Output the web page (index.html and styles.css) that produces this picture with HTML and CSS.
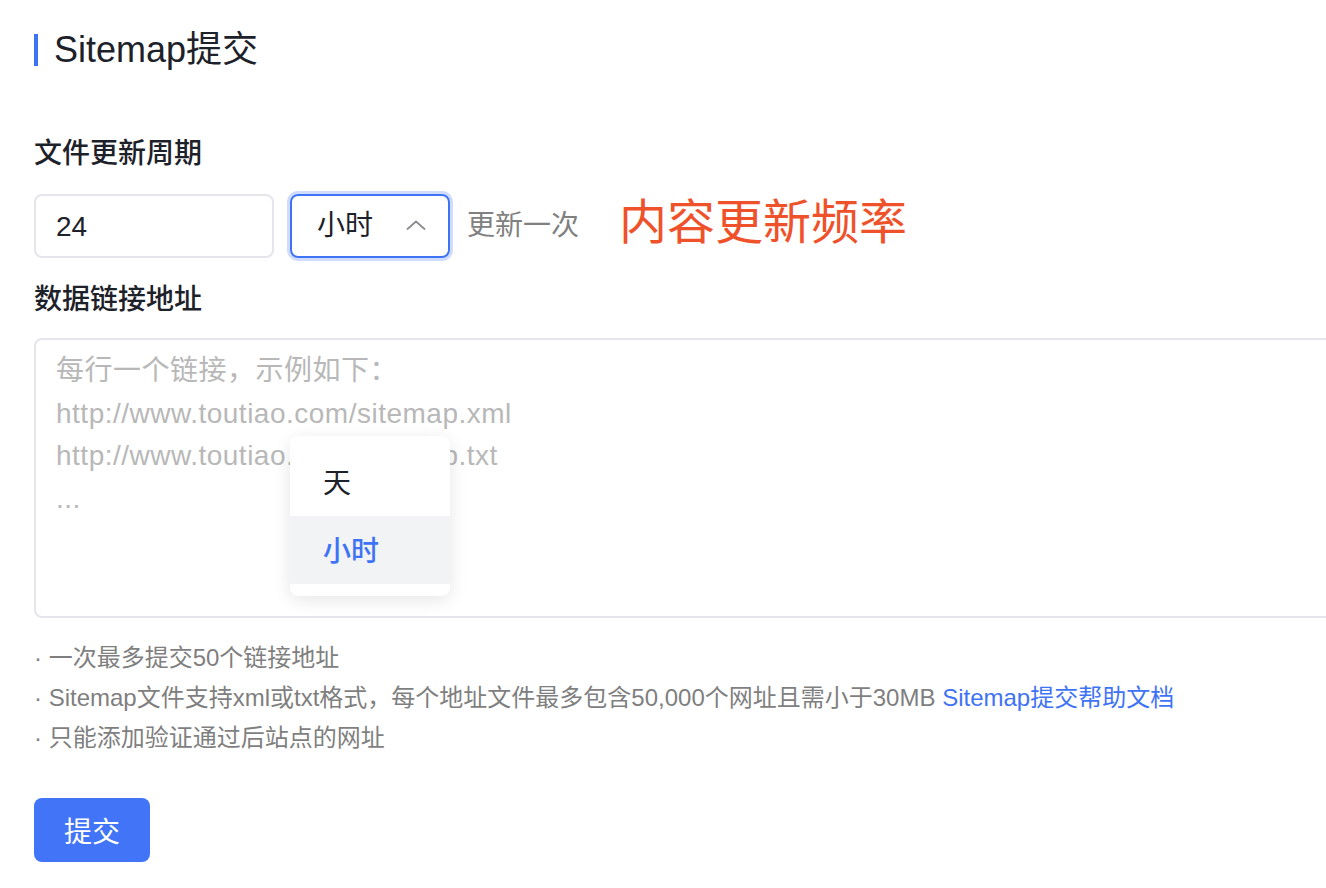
FILE: index.html
```html
<!DOCTYPE html>
<html lang="zh-CN">
<head>
<meta charset="utf-8">
<title>Sitemap提交</title>
<link rel="stylesheet" href="styles.css">
</head>
<body>
<main class="page">
  <h1 class="title">Sitemap提交</h1>

  <section class="field">
    <div class="label">文件更新周期</div>
    <div class="period-row">
      <div class="input-box">24</div>
      <div class="select-wrap">
        <div class="select is-open">
          <span class="select-value">小时</span>
          <svg class="chevron" width="20" height="10" viewBox="0 0 20 10"><polyline points="1.5,9 10,1.5 18.5,9" fill="none" stroke="#8a8d92" stroke-width="1.8" stroke-linecap="round" stroke-linejoin="round"/></svg>
        </div>
        <ul class="dropdown">
          <li class="option">天</li>
          <li class="option is-active">小时</li>
        </ul>
      </div>
      <span class="suffix">更新一次</span>
      <span class="annotation">内容更新频率</span>
    </div>
  </section>

  <section class="field">
    <div class="label">数据链接地址</div>
    <textarea class="links" placeholder="每行一个链接，示例如下：&#10;http://www.toutiao.com/sitemap.xml&#10;http://www.toutiao.com/sitemap.txt&#10;..."></textarea>
  </section>

  <ul class="hints">
    <li>· 一次最多提交50个链接地址</li>
    <li>· Sitemap文件支持xml或txt格式，每个地址文件最多包含50,000个网址且需小于30MB <a class="help-link" href="#">Sitemap提交帮助文档</a></li>
    <li>· 只能添加验证通过后站点的网址</li>
  </ul>

  <button class="submit" type="button">提交</button>
</main>
</body>
</html>
```

FILE: styles.css
```css
html, body {
  margin: 0;
  padding: 0;
  background: #ffffff;
  overflow: hidden;
}

body {
  font-family: "Liberation Sans", "Noto Sans CJK SC", sans-serif;
  color: #1d2129;
}

.page {
  padding: 34px 0 0 34px;
}

.title {
  margin: 0;
  height: 32px;
  line-height: 32px;
  font-size: 36px;
  font-weight: 400;
  color: #1d2129;
  border-left: 4px solid #3f73f5;
  padding-left: 16px;
}

.field {
  margin-top: 20px;
}

.title + .field {
  margin-top: 68px;
}

.label {
  height: 40px;
  line-height: 40px;
  font-size: 28px;
  font-weight: 500;
  color: #1d2129;
  margin-bottom: 20px;
}

.field + .field .label {
  line-height: 44px;
}

.period-row {
  display: flex;
  align-items: center;
  height: 64px;
}

.input-box {
  box-sizing: border-box;
  width: 240px;
  height: 64px;
  border: 2px solid #e5e6eb;
  border-radius: 8px;
  padding-left: 20px;
  font-size: 28px;
  line-height: 62px;
  color: #1d2129;
}

.select-wrap {
  position: relative;
  margin-left: 16px;
}

.select {
  box-sizing: border-box;
  width: 160px;
  height: 64px;
  border: 2px solid #3f73f5;
  border-radius: 8px;
  box-shadow: 0 0 0 3px #cfdcfd;
  padding-left: 25px;
  padding-right: 22px;
  display: flex;
  align-items: center;
  justify-content: space-between;
}

.select-value {
  font-size: 28px;
  line-height: 40px;
  color: #1d2129;
}

.chevron {
  display: block;
  margin-top: -2px;
}

.dropdown {
  position: absolute;
  top: 242px;
  left: 0;
  width: 160px;
  margin: 0;
  padding: 12px 0;
  list-style: none;
  background: #ffffff;
  border-radius: 8px;
  box-shadow: 0 4px 18px rgba(0, 0, 0, 0.1);
  box-sizing: border-box;
  z-index: 5;
}

.option {
  height: 68px;
  line-height: 72px;
  padding-left: 33px;
  font-size: 28px;
  color: #1d2129;
}

.option.is-active {
  background: #f2f3f5;
  color: #3f73f5;
  font-weight: 500;
}

.suffix {
  margin-left: 17px;
  font-size: 28px;
  color: #808080;
  line-height: 40px;
}

.annotation {
  margin-left: 40px;
  font-size: 48px;
  line-height: 56px;
  color: #ef522a;
  margin-top: -6px;
}

.links {
  display: block;
  box-sizing: border-box;
  width: 1400px;
  height: 280px;
  margin: 0;
  border: 2px solid #e5e6eb;
  border-radius: 8px;
  padding: 10px 20px;
  font-family: "Liberation Sans", "Noto Sans CJK SC", sans-serif;
  font-size: 28px;
  line-height: 42.67px;
  letter-spacing: 0.5px;
  color: #1d2129;
  resize: none;
  outline: none;
  background: #ffffff;
}

.links::placeholder {
  color: #b8b8b8;
}

.hints {
  list-style: none;
  margin: 20px 0 0 0;
  padding: 0;
}

.hints li {
  height: 40px;
  line-height: 40px;
  font-size: 24px;
  color: #7f7f7f;
}

.help-link {
  color: #3f73f5;
  text-decoration: none;
}

.submit {
  display: block;
  margin-top: 40px;
  width: 116px;
  height: 64px;
  border: none;
  border-radius: 8px;
  background: #4174f6;
  color: #ffffff;
  font-family: "Liberation Sans", "Noto Sans CJK SC", sans-serif;
  font-size: 28px;
  padding: 0;
}
```
